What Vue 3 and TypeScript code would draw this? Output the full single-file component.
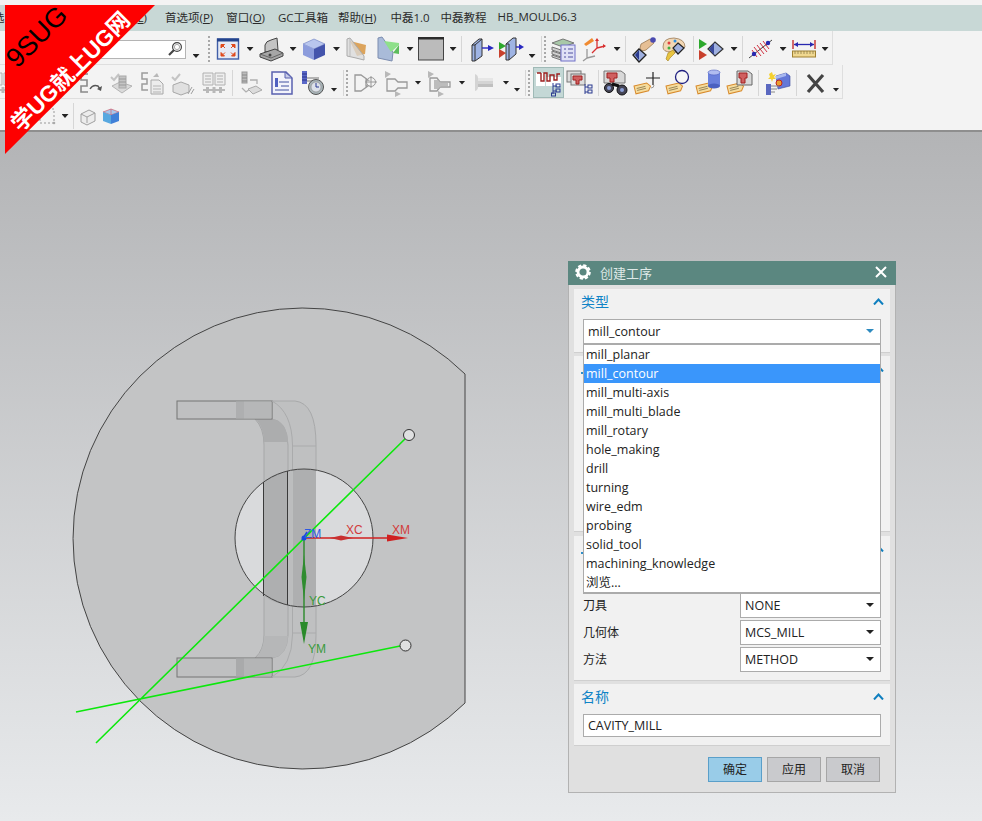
<template>
  <div class="app">
    <div class="top-strip" />

    <div class="menubar">
      <div class="menu-lead">
        <span class="menu-cut">选</span>
        <span>工具(<u>L</u>)</span>
      </div>
      <span v-for="m in menus" :key="m.name" class="menu-item" :style="{ marginRight: m.gap + 'px' }">
        {{ m.name }}<template v-if="m.key">(<u>{{ m.key }}</u>)</template>
      </span>
    </div>

    <div class="toolbars">
      <div v-for="(row, r) in rows" :key="r" class="tool-row" :class="'row-' + r">
        <div v-if="r === 0" class="search">
          <svg viewBox="0 0 16 16" width="16" height="16">
            <circle cx="10" cy="6" r="4.4" fill="#fff" stroke="#444" stroke-width="1.2" />
            <circle cx="10" cy="6" r="2.6" fill="none" stroke="#aaa" />
            <path d="M7 9 2 14" stroke="#444" stroke-width="2.2" />
          </svg>
        </div>
        <div
          v-for="(t, i) in row"
          :key="i"
          class="tool"
          :class="[t.k, { on: t.on }]"
          :style="{ marginLeft: t.ml + 'px' }"
        >
          <svg v-if="t.k === 'icon'" viewBox="0 0 28 28" width="28" height="28" v-html="icons[t.i || 'fit']" />
        </div>
      </div>
    </div>

    <div class="viewport">
      <svg class="scene" viewBox="0 132 982 689" width="982" height="689">
        <!-- round blank with flat cut on the right -->
        <path d="M465 374 A230.5 230.5 0 1 0 465 703 Z" fill="#c3c4c5" stroke="#444" stroke-width="1" />

        <!-- U shaped pocket -->
        <path d="M272 401H295Q316 403 316 445V635Q316 675 295 677H272Z" fill="#bfc0c1" stroke="#a8a9aa" />
        <path d="M255 419H272Q287 421 288 445V635Q287 656 272 658H255Q264 650 264 635V445Q264 428 255 419Z" fill="#bdbebf" stroke="#a6a7a8" />
        <path d="M256 419H272Q287 421 288 442H264Q264 428 256 419Z" fill="#acadae" />
        <path d="M264 636H288Q287 656 272 658H256Q264 650 264 636Z" fill="#b6b7b8" />
        <rect x="177" y="401" width="95" height="18" fill="#bfc0c1" stroke="#757575" />
        <rect x="177" y="658" width="95" height="19" fill="#bfc0c1" stroke="#757575" />
        <rect x="236" y="401.500" width="8" height="17" fill="#aeafb0" />
        <rect x="244" y="401.500" width="27.500" height="17" fill="#b6b7b8" />
        <rect x="236" y="658.500" width="8" height="18" fill="#a9aaab" />
        <rect x="244" y="658.500" width="27.500" height="18" fill="#b4b5b6" />
        <path d="M292.500 445V635M272 401Q292 412 292.500 445M292.500 635Q292 666 272 677M292.500 446H316M292.500 633H316" fill="none" stroke="#aaabac" />

        <!-- center hole -->
        <circle cx="304" cy="538" r="69" fill="#d9dadc" />
        <path d="M264 481V596Q275 604 288 605V471Q275 473 264 481Z" fill="#aeafb0" />
        <path d="M288 471V605.500L292.500 606.500V470Z" fill="#bcbdbe" />
        <path d="M292.500 470V606.500Q305 608 316 606V470Q305 468 292.500 470Z" fill="#aeafb0" />
        <path d="M263.500 482V596M287.500 471V605" stroke="#3a3a3a" stroke-width="1" fill="none" />
        <circle cx="304" cy="538" r="69" fill="none" stroke="#444" stroke-width="1" />

        <!-- green cut lines -->
        <path d="M409 435 96 743M405 645 76 712" stroke="#0ce80c" stroke-width="1.600" fill="none" />
        <circle cx="409" cy="435" r="5.500" fill="#dfe0e1" stroke="#333" />
        <circle cx="405.500" cy="645.500" r="5.500" fill="#dfe0e1" stroke="#333" />

        <!-- wcs -->
        <path d="M304 538H400" stroke="#d02020" stroke-width="1.400" />
        <path d="M330 538 341 535.500 353 538 341 540.500Z" fill="#c83030" />
        <path d="M387 534.500 408 538 387 541.500Z" fill="#d02020" />
        <path d="M304 538V632" stroke="#2a8a2a" stroke-width="1.400" />
        <path d="M304 555 306.500 577 304 600 301.500 577Z" fill="#2f8c2f" />
        <path d="M300 622 304 644 308 622Z" fill="#2a8a2a" />
        <circle cx="304" cy="538" r="2.500" fill="#1a4ae0" />
        <path d="M302 540 307 532" stroke="#1a4ae0" stroke-width="1.500" />
        <text x="304" y="538" class="axis blue">ZM</text>
        <text x="346" y="534" class="axis red">XC</text>
        <text x="392" y="534" class="axis red">XM</text>
        <text x="309" y="605" class="axis green">YC</text>
        <text x="308" y="653" class="axis green">YM</text>
      </svg>

      <div class="dialog">
        <div class="dlg-title">
          <svg viewBox="0 0 16 16" width="16" height="16">
            <circle cx="8" cy="8" r="5" fill="none" stroke="#fff" stroke-width="2.800" />
            <circle cx="8" cy="8" r="6.800" fill="none" stroke="#fff" stroke-width="2" stroke-dasharray="3.300 2.040" />
          </svg>
          <span class="dlg-name">创建工序</span>
          <svg class="dlg-close" viewBox="0 0 12 12" width="12" height="12">
            <path d="M1 1 11 11M11 1 1 11" stroke="#fff" stroke-width="2" />
          </svg>
        </div>

        <section class="sec sec-type">
          <header class="sec-head">
            <span>类型</span>
            <svg class="chev" viewBox="0 0 11 7" width="11" height="7"><path d="M1 6.500 5.500 1.500 10 6.500" /></svg>
          </header>
          <div class="select-wrap">
            <div class="select">
              <span>mill_contour</span>
              <i class="sel-caret blue" />
            </div>
            <ul class="dropdown">
              <li v-for="o in types" :key="o" :class="{ hi: o === 'mill_contour' }">{{ o }}</li>
            </ul>
          </div>
        </section>

        <section class="sec sec-sub">
          <header class="sec-head">
            <i class="peek" />
            <svg class="chev" viewBox="0 0 11 7" width="11" height="7"><path d="M1 6.500 5.500 1.500 10 6.500" /></svg>
          </header>
        </section>

        <section class="sec sec-pos">
          <header class="sec-head">
            <i class="peek" />
            <svg class="chev" viewBox="0 0 11 7" width="11" height="7"><path d="M1 6.500 5.500 1.500 10 6.500" /></svg>
          </header>
          <div class="pos-rows">
            <div v-for="p in places" :key="p.label" class="pos-row">
              <span class="pos-label">{{ p.label }}</span>
              <div class="select small">
                <span>{{ p.value }}</span>
                <i class="sel-caret" />
              </div>
            </div>
          </div>
        </section>

        <section class="sec sec-name">
          <header class="sec-head">
            <span>名称</span>
            <svg class="chev" viewBox="0 0 11 7" width="11" height="7"><path d="M1 6.500 5.500 1.500 10 6.500" /></svg>
          </header>
          <div class="name-input">CAVITY_MILL</div>
        </section>

        <div class="dlg-foot">
          <button class="btn primary">确定</button>
          <button class="btn">应用</button>
          <button class="btn">取消</button>
        </div>
      </div>
    </div>

    <div class="ribbon">
      <span class="rb-top">9SUG</span>
      <span class="rb-main">学UG就上UG网</span>
    </div>
  </div>
</template>

<script setup lang="ts">
type Kind = 'icon' | 'caret' | 'low' | 'sep' | 'dots'
type Spec = [number, Kind, string?, boolean?]

const menus = [
  { name: '首选项', key: 'P', gap: 13 },
  { name: '窗口', key: 'O', gap: 13 },
  { name: 'GC工具箱', key: '', gap: 10 },
  { name: '帮助', key: 'H', gap: 14 },
  { name: '中磊1.0', key: '', gap: 11 },
  { name: '中磊教程', key: '', gap: 11 },
  { name: 'HB_MOULD6.3', key: '', gap: 0 },
]

const types = [
  'mill_planar', 'mill_contour', 'mill_multi-axis', 'mill_multi_blade', 'mill_rotary',
  'hole_making', 'drill', 'turning', 'wire_edm', 'probing', 'solid_tool',
  'machining_knowledge', '浏览...',
]

const places = [
  { label: '刀具', value: 'NONE' },
  { label: '几何体', value: 'MCS_MILL' },
  { label: '方法', value: 'METHOD' },
]

const tagBit = `<g transform="rotate(-14 11 20)"><path d="M3 15h13l3 4-3 4H3z" fill="#f6dc9c" stroke="#d88a2c"/><path d="M5 18h9M5 20h9" stroke="#8a7a50" stroke-width=".8"/></g>`

const icons: Record<string, string> = {
  fit: `<rect x="3.500" y="4" width="21" height="20" fill="#e6eaf4" stroke="#3f5ea8" stroke-width="1.400"/><rect x="3" y="3.500" width="22" height="3" fill="#24448c"/><path d="M7 9.500h3.500L7 13zM21 9.500h-3.500L21 13zM7 21h3.500L7 17.500zM21 21h-3.500L21 17.500zM9 11l2 2M19 11l-2 2M9 19.500l2-2M19 19.500l-2-2" fill="#e04a1c" stroke="#e04a1c"/>`,
  part: `<path d="M8 17V10q1-4 6-5l6-2 1 12z" fill="#c4c4c4" stroke="#444"/><path d="M3 19l15-5 8 4v3l-12 5-11-4z" fill="#a6a6a6" stroke="#444"/><path d="M3 19l11 4 12-5" fill="none" stroke="#666"/><circle cx="13" cy="20" r="1.500" fill="#444"/>`,
  cube: `<path d="M3 9l11-5 11 5-11 5z" fill="#b9c6ee" stroke="#6a7cc0" stroke-width=".6"/><path d="M3 9l11 5v11L3 20z" fill="#8c9cdc"/><path d="M25 9l-11 5v11l11-5z" fill="#4454ac"/>`,
  orange: `<path d="M7 6l16 4-1 9-8 2z" fill="#dca45c"/><path d="M4 4l3-1 14 18v4l-8-2-9-2z" fill="#dadada" fill-opacity=".75" stroke="#aaa"/><path d="M7 3v18" stroke="#bbb"/>`,
  blueplate: `<path d="M4 3l4-1 11 15-1 9-14-3z" fill="#a9bbd9" stroke="#7d8db0"/><path d="M10 6l7 11 8-7v-2z" fill="#8ee08a"/><path d="M19 18l6-8v9z" fill="#5cbc5c"/>`,
  square: `<rect x="1.500" y="3" width="25" height="22" fill="#bbb" stroke="#444"/><rect x="1" y="2" width="26" height="2.500" fill="#2c2c2c"/>`,
  face: `<path d="M4 10l7-6h3v17l-7 5H4z" fill="#9fb4e4" stroke="#333"/><path d="M4 10h3v16M7 10l7-6" fill="none" stroke="#333"/><path d="M14 13h8" stroke="#2828c0" stroke-width="1.400"/><path d="M20 10l6 3-6 3z" fill="#2828c0"/>`,
  face2: `<path d="M2 7l7 4-7 4z" fill="#2ca82c"/><path d="M2 14l7 4-7 5z" fill="#c8402c"/><path d="M9 9l7-6h3v16l-7 6H9z" fill="#9fb4e4" stroke="#333"/><path d="M9 9h3v16" fill="none" stroke="#333"/><path d="M19 12h4" stroke="#2828c0" stroke-width="1.400"/><path d="M22 9l5 3-5 3z" fill="#2828c0"/>`,
  layers: `<path d="M2 8l11-4 11 4-11 4z" fill="#a8c8a8" stroke="#777"/><path d="M2 12l9 3v3l-9-3zM2 16l9 3v3l-9-3zM2 20l9 3v2l-9-3z" fill="#cfcfcf" stroke="#777"/><rect x="11" y="10" width="14" height="16" fill="#e0e2f6" stroke="#7070c8"/><path d="M14 14h2M18 14h5M14 18h2M18 18h5M14 22h2M18 22h5" stroke="#5050a0"/>`,
  csys: `<path d="M16 13V5M16 13l8-2M16 13l-5 5" stroke="#d83030" stroke-width="1.300" fill="none"/><path d="M16 3l2 3h-4zM25 11l-3 2v-4z" fill="#d83030"/><path d="M3 9l8-6 2 3-8 5z" fill="#f08a30"/><path d="M6 14v9M6 23l8-2M6 23l-4 3" stroke="#999" stroke-width="1.300" fill="none"/>`,
  hand: `<path d="M11 9l9-5 4 4-8 7q-5 2-6-2z" fill="#e6bf94" stroke="#8c6a44" stroke-width=".7"/><circle cx="23" cy="5" r="2.800" fill="#4a4ab0"/><path d="M3 20l6-6 7 6-7 7z" fill="#9fb0e0" stroke="#222" stroke-width="1.300"/><path d="M9 15l-4 5 4 5z" fill="#2a3a90"/>`,
  palette: `<path d="M3 12q0-9 11-9 11 1 11 9-3 4-8 5-4 1-6 0-8 0-8-5z" fill="#f2d7b4" stroke="#8c6a44" stroke-width=".7"/><circle cx="9" cy="8" r="1.500" fill="#e04040"/><circle cx="15" cy="6" r="1.500" fill="#3090e0"/><circle cx="9" cy="13" r="1.500" fill="#40b040"/><path d="M8 18l5-3 2 3-5 5-2 3-2-2z" fill="#e8c440" stroke="#a08020" stroke-width=".6"/><path d="M18 8l6 5-6 6-5-6z" fill="#9fb0e0" stroke="#222" stroke-width="1.200"/>`,
  play: `<path d="M2 4l8 5-8 5z" fill="#2ca82c"/><path d="M2 15l8 5-8 5z" fill="#c8402c"/><path d="M11 14l7-7 8 7-8 7z" fill="#9fb0e0" stroke="#333" stroke-width="1.200"/><path d="M17 8l-5 6 5 6z" fill="#3a4a9c"/>`,
  antenna: `<path d="M2 23L25 5" stroke="#444" stroke-width="1"/><path d="M10 10l7 9M13 8l7 9M7 12l7 9M16 6l6 8M5 15l5 7" stroke="#d03040" stroke-width="1"/><circle cx="21" cy="8" r="2.200" fill="#2828b0"/><circle cx="7" cy="19" r="2.200" fill="#2828b0"/>`,
  ruler: `<path d="M3 5v9M25 5v9" stroke="#c02020" stroke-width="1.300"/><path d="M4 9.500h20" stroke="#2828b0" stroke-width="1.300"/><path d="M4 9.500l4-2.500v5zM24 9.500l-4-2.500v5z" fill="#2828b0"/><rect x="2.500" y="16" width="23" height="6" fill="#f0d890" stroke="#a08030"/><path d="M5 16v3M8 16v3M11 16v3M14 16v3M17 16v3M20 16v3M23 16v3" stroke="#807040" stroke-width=".7"/>`,
  sarrow: `<path d="M11 5H4v6h6v6H4v6h7" fill="none" stroke="#8a8a8a" stroke-width="1.600"/><path d="M13 20q3-5 8-3l2 3" fill="none" stroke="#555" stroke-width="1.400"/><path d="M25 17l-1 5-4-2z" fill="#555"/>`,
  grayCheck: `<path d="M3 8l3 3 5-6" fill="none" stroke="#c4c4c4" stroke-width="2"/><path d="M4 17l8-4 12 4-10 7z" fill="#dadada" stroke="#b4b4b4"/><rect x="11" y="7" width="7" height="12" fill="#c4c4c4" stroke="#a8a8a8"/><path d="M11 10h7M11 13h7M11 16h7" stroke="#9a9a9a"/>`,
  grayDoc: `<path d="M10 4H4v6h5v5H4v6h6" fill="none" stroke="#9c9c9c" stroke-width="1.500"/><path d="M13 11h8l4 4v10H13z" fill="#ececec" stroke="#a8a8a8"/><path d="M15 17h8M15 20h8M15 23h8" stroke="#b4b4b4"/><path d="M15 8l4-4 2 4z" fill="#b8b8b8"/>`,
  grayBook: `<path d="M3 4h10v12H3zM15 4h10v12H15z" fill="#eee" stroke="#b0b0b0"/><path d="M5 7h6M5 10h6M5 13h6M17 7h6M17 10h6M17 13h6" stroke="#b0b0b0"/><path d="M3 21h22" stroke="#a0a0a0" stroke-width="1.400"/><rect x="6" y="18" width="3" height="6" fill="#b8b8b8"/><rect x="19" y="18" width="3" height="6" fill="#b8b8b8"/><rect x="12.500" y="18" width="3" height="6" fill="#b8b8b8"/>`,
  grayCheck2: `<path d="M3 8l3 3 5-6" fill="none" stroke="#c4c4c4" stroke-width="2"/><path d="M4 16l8-3 8 3v7l-8 3-8-3z" fill="#e0e0e0" stroke="#a8a8a8"/><path d="M19 25l4-7M22 25l3-5" stroke="#a0a0a0"/>`,
  grayTool: `<rect x="6" y="3" width="5" height="11" fill="#bbb" stroke="#999"/><path d="M6 6h5M6 9h5M6 12h5" stroke="#888"/><path d="M14 11h7v4M6 19l4 4 4-3" fill="none" stroke="#b0b0b0" stroke-width="1.300"/><path d="M12 20l8-3 6 4-9 4z" fill="#dcdcdc" stroke="#aaa"/>`,
  report: `<path d="M4 3h14l6 6v16H4z" fill="#f2f3fb" stroke="#5a62b0" stroke-width="1.500"/><rect x="7" y="9" width="3" height="9" fill="#5060c0"/><path d="M11 13h10M13 17h8M7 21h14" stroke="#4050a0"/><path d="M17 3l7 6h-7z" fill="#c8cce8" stroke="#5a62b0"/>`,
  clock: `<rect x="3" y="2" width="5" height="13" fill="#5a68c8"/><path d="M3 5h5M3 8h5M3 11h5" stroke="#2a3488"/><path d="M8 9h12M8 12h6" stroke="#777" stroke-width="1.200"/><circle cx="17" cy="18" r="7.500" fill="#a8b4b8" stroke="#555"/><circle cx="17" cy="18" r="5" fill="#dde2ea" stroke="#888" stroke-width=".6"/><path d="M17 14v4h3" stroke="#2a3a90" fill="none"/>`,
  hole: `<path d="M3 6h6l7 5h-2v6h2l-7 5H3z" fill="none" stroke="#999" stroke-width="1.300"/><circle cx="19" cy="13" r="4.500" fill="none" stroke="#999"/><path d="M13 13h12M19 7v12" stroke="#999"/>`,
  mill1: `<path d="M2 2l6 3-6 4z" fill="#b8b8b8"/><path d="M4 10h8l3 3h9v6H15l-3 3H4z" fill="none" stroke="#9a9a9a" stroke-width="1.300"/><path d="M12 22l6 3-6 3z" fill="#b8b8b8"/>`,
  mill2: `<path d="M2 2l6 3-6 4z" fill="#b8b8b8"/><path d="M4 9h7l3 4h10v5H14l-3 4H4z" fill="none" stroke="#9a9a9a" stroke-width="1.300"/><path d="M8 11h4l3 3h7v3h-7l-3 3H8z" fill="#bcbcbc"/><path d="M12 22l6 3-6 3z" fill="#b8b8b8"/>`,
  mill3: `<path d="M6 5q3 1 3 4h15v9H9q0 3-3 4z" fill="#d4d4d4"/><path d="M9 9h15v3H9z" fill="#e6e6e6"/><path d="M9 15h15v3H9z" fill="#c0c0c0"/>`,
  prog: `<path d="M1 4h9v13h-9zM11 8h15v9H11z" fill="#fff"/><path d="M2 4h4M6 4v8h3V4h3v8h3V6h4v5h3V5h3" fill="none" stroke="#9c2020" stroke-width="1.400"/><path d="M18 14v11M18 17h4M18 22h4" stroke="#2a3a90"/><rect x="21" y="15" width="4" height="3" fill="none" stroke="#2a3a90"/><rect x="21" y="20" width="4" height="3" fill="none" stroke="#2a3a90"/><rect x="16.500" y="24" width="4" height="3" fill="none" stroke="#2a3a90"/>`,
  tool2: `<rect x="2" y="2" width="14" height="11" fill="#ddd" stroke="#777"/><rect x="6" y="5" width="14" height="11" fill="#ddd" stroke="#777"/><path d="M8 7h9v4h-3v4h-3v-4H8z" fill="#d06060" stroke="#a02020"/><path d="M20 15v10M20 18h3M20 23h3" stroke="#2a3a90"/><rect x="23" y="16" width="4" height="3" fill="none" stroke="#2a3a90"/><rect x="23" y="21" width="4" height="3" fill="none" stroke="#2a3a90"/>`,
  bino: `<path d="M3 2h17l4 3v9H3z" fill="#d8d8d8" stroke="#777"/><path d="M6 4h10v5h-3v4H9V9H6z" fill="#d06060" stroke="#a02020"/><circle cx="8" cy="19" r="4.500" fill="#445" stroke="#111"/><circle cx="21" cy="21" r="5" fill="#445" stroke="#111"/><circle cx="8" cy="19" r="2" fill="#8ca0d8"/><circle cx="21" cy="21" r="2" fill="#8ca0d8"/><path d="M11 15l7 2" stroke="#111" stroke-width="3"/>`,
  tagPlus: `${tagBit}<path d="M21 3v13M14 9h14" stroke="#222" stroke-width="1.200"/><path d="M19 19q3 0 3-3" fill="none" stroke="#999"/>`,
  tagCircle: `${tagBit}<circle cx="18" cy="8" r="6.500" fill="#fff" fill-opacity=".3" stroke="#202080" stroke-width="1.300"/>`,
  tagCyl: `${tagBit}<rect x="14" y="3" width="12" height="14" fill="#6a80dc"/><ellipse cx="20" cy="3.500" rx="6" ry="2.500" fill="#b0bcf0" stroke="#5060c0" stroke-width=".6"/><ellipse cx="20" cy="17" rx="6" ry="2.500" fill="#4a60c0"/>`,
  tagTool: `${tagBit}<path d="M12 2h11l4 3v11H12z" fill="#d8d8d8" stroke="#666"/><path d="M14 4h8v5h-2v5h-4V9h-2z" fill="#d06060" stroke="#a02020"/>`,
  spark: `<path d="M13 7l10-3 4 3v10l-12 3z" fill="#6478d8" stroke="#3a4aa0" stroke-width=".6"/><path d="M13 7l10-3v3l-10 3z" fill="#a8b8f0"/><path d="M9 3l1 3 3-1-2 3 2 2-3 0-1 3-1-3H5l2-2-1-3z" fill="#f4d030"/><circle cx="16" cy="14" r="3" fill="#e8a030" stroke="#c02020"/><rect x="3" y="15" width="5" height="11" fill="#5a68c0"/><path d="M8 17h8M8 20h6M8 23h4" stroke="#888"/>`,
  cross: `<path d="M7 6l15 17M22 6L7 23" stroke="#444" stroke-width="3.200"/>`,
  dashbox: `<rect x="7" y="7" width="14" height="14" fill="none" stroke="#999" stroke-dasharray="2 2"/><circle cx="21" cy="21" r="1.300" fill="#aaa"/>`,
  wedge: `<path d="M7 12l8-4 6 3v8l-8 4-6-3z" fill="#ececec" stroke="#a0a0a0"/><path d="M7 12l6 3 8-4M13 15v6" fill="none" stroke="#a0a0a0"/>`,
  colorbox: `<path d="M6 10l8-3 8 3-8 3z" fill="#a8c8ec" stroke="#d06070" stroke-width=".7"/><path d="M6 10l8 3v9l-8-3z" fill="#58a8e0"/><path d="M22 10l-8 3v9l8-3z" fill="#4080d8"/><path d="M14 7v6" stroke="#d06070" stroke-width=".7"/>`,
}

const widths: Record<Kind, number> = { icon: 28, caret: 7, low: 7, sep: 1, dots: 2 }

// turn wanted centre positions into margins, so the row stays in normal flow
function layout(start: number, specs: Spec[]) {
  let edge = start
  return specs.map(([x, k, i, on]) => {
    const w = on ? 31 : widths[k]
    const ml = x - w / 2 - edge
    edge = x + w / 2
    return { k, i, on, ml }
  })
}

const rows = [
  layout(186, [
    [196, 'low'], [209, 'dots'], [228, 'icon', 'fit'], [250, 'caret'], [271, 'icon', 'part'], [293, 'caret'],
    [314, 'icon', 'cube'], [336.5, 'caret'], [357, 'icon', 'orange'], [388, 'icon', 'blueplate'], [410, 'caret'],
    [431, 'icon', 'square'], [453, 'caret'], [461.5, 'sep'], [482, 'icon', 'face'], [511, 'icon', 'face2'],
    [532, 'low'], [541, 'sep'], [545, 'dots'], [564, 'icon', 'layers'], [595, 'icon', 'csys'], [617, 'caret'],
    [625.5, 'sep'], [644, 'icon', 'hand'], [674, 'icon', 'palette'], [693, 'sep'], [711, 'icon', 'play'],
    [734, 'caret'], [742.5, 'sep'], [761, 'icon', 'antenna'], [783, 'caret'], [804, 'icon', 'ruler'], [825, 'caret'],
  ]),
  layout(0, [
    [3, 'icon', 'grayBook'], [91, 'icon', 'sarrow'], [122, 'icon', 'grayCheck'], [152, 'icon', 'grayDoc'],
    [183, 'icon', 'grayCheck2'], [214, 'icon', 'grayBook'], [232, 'sep'], [250, 'icon', 'grayTool'],
    [282, 'icon', 'report'], [313, 'icon', 'clock'], [334, 'low'], [343, 'sep'], [347, 'dots'],
    [366, 'icon', 'hole'], [397, 'icon', 'mill1'], [418, 'caret'], [440, 'icon', 'mill2'], [462, 'caret'],
    [483, 'icon', 'mill3'], [506, 'caret'], [517, 'low'], [525, 'sep'], [529, 'dots'],
    [548.5, 'icon', 'prog', true], [579, 'icon', 'tool2'], [598, 'sep'], [615, 'icon', 'bino'],
    [646, 'icon', 'tagPlus'], [678, 'icon', 'tagCircle'], [708, 'icon', 'tagCyl'], [739, 'icon', 'tagTool'],
    [758, 'sep'], [777, 'icon', 'spark'], [796, 'sep'], [815, 'icon', 'cross'], [836, 'low'],
  ]),
  layout(0, [[47, 'icon', 'dashbox'], [65, 'caret'], [73, 'sep'], [88, 'icon', 'wedge'], [111, 'icon', 'colorbox']]),
]
</script>

<style scoped>
.app {
  position: relative;
  width: 982px;
  height: 821px;
  overflow: hidden;
  display: flex;
  flex-direction: column;
  background: #f3f3f3;
  font-family: "Open Sans", "Noto Sans CJK SC", sans-serif;
  font-size: 12px;
  color: #222;
}

.top-strip {
  height: 5px;
}

.menubar {
  height: 27px;
  box-sizing: border-box;
  padding-bottom: 2px;
  display: flex;
  align-items: center;
  background: #c8d8d6;
  white-space: nowrap;
  color: #2a2a2a;
  font-size: 11.500px;
}

.menu-lead {
  width: 165px;
  flex: none;
  display: flex;
  justify-content: space-between;
  padding-right: 18px;
  box-sizing: border-box;
}

.menu-cut {
  margin-left: -7px;
}

.toolbars {
  height: 99px;
  flex: none;
  border-bottom: 2px solid #8e8e8e;
  display: flex;
  flex-direction: column;
}

.tool-row {
  display: flex;
  align-items: center;
  flex: none;
  box-sizing: border-box;
}

.row-0 {
  height: 34px;
  width: 833px;
  padding-top: 3px;
  border-bottom: 1px solid #dedede;
  border-right: 1px solid #dedede;
}

.row-1 {
  height: 34px;
  width: 843px;
  padding-top: 2px;
  border-bottom: 1px solid #dedede;
  border-right: 1px solid #dedede;
}

.row-2 {
  height: 31px;
  padding-top: 3px;
}

.search {
  width: 146px;
  height: 19px;
  margin-left: 40px;
  flex: none;
  box-sizing: border-box;
  background: #fff;
  border: 1px solid #b4b4b4;
  display: flex;
  align-items: center;
  justify-content: flex-end;
  padding-right: 2px;
}

.tool {
  flex: none;
  display: flex;
  align-items: center;
  justify-content: center;
}

.tool.icon {
  width: 28px;
  height: 28px;
}

.tool.icon.on {
  width: 31px;
  height: 31px;
  box-sizing: border-box;
  background: #c4d8d6;
  border: 1px solid #9fb9b6;
}

.tool.caret,
.tool.low {
  width: 7px;
  height: 4px;
  background: #222;
  clip-path: polygon(0 0, 100% 0, 50% 100%);
}

.tool.low {
  margin-top: 14px;
}

.tool.sep {
  width: 1px;
  height: 26px;
  background: #d6d6d6;
}

.tool.dots {
  width: 2px;
  height: 26px;
  background: repeating-linear-gradient(to bottom, #a8a8a8 0 2px, transparent 2px 4px);
}

.viewport {
  position: relative;
  flex: 1;
  background: linear-gradient(to bottom, #b3b4b6, #e8eaec);
}

.scene {
  display: block;
}

.axis {
  font-family: "Liberation Sans", sans-serif;
  font-size: 12px;
}

.axis.blue {
  fill: #2a5ae0;
}

.axis.red {
  fill: #d23c3c;
}

.axis.green {
  fill: #3a9a3a;
}

.dialog {
  position: absolute;
  left: 568px;
  top: 129px;
  width: 328px;
  height: 532px;
  box-sizing: border-box;
  background: #e0e0e0;
  border: 1px solid #b2b2b2;
  border-top: none;
  font-size: 12.500px;
  color: #222;
}

.dlg-title {
  height: 24px;
  box-sizing: border-box;
  margin: 0 -1px;
  padding: 0 9px 2px 7px;
  background: #5b8780;
  display: flex;
  align-items: center;
  color: #dfe9e7;
  font-size: 13px;
}

.dlg-name {
  margin-left: 9px;
  flex: 1;
}

.dlg-close {
  flex: none;
}

.sec {
  margin: 0 5px;
  background: #f1f1f1;
  border-bottom: 1px solid #cfcfcf;
  box-sizing: border-box;
}

.sec-type {
  height: 64px;
  margin-top: 4px;
}

.sec-sub {
  height: 176px;
  margin-top: 3px;
}

.sec-pos {
  height: 145px;
  margin-top: 4px;
}

.sec-name {
  height: 62px;
  margin-top: 3px;
}

.sec-head {
  height: 30px;
  box-sizing: border-box;
  padding: 0 6px 6px 7px;
  display: flex;
  align-items: center;
  justify-content: space-between;
  color: #0f83c6;
  font-size: 14px;
}

.peek {
  width: 3px;
  height: 2px;
  margin-left: -0.500px;
  margin-top: 9px;
  background: #2f8fca;
}

.chev {
  fill: none;
  stroke: #0f7fbf;
  stroke-width: 2;
}

.select-wrap {
  position: relative;
  margin: 0 9px;
}

.select {
  height: 25px;
  box-sizing: border-box;
  background: #fff;
  border: 1px solid #ababab;
  padding: 0 5px 1px 4px;
  display: flex;
  align-items: center;
  justify-content: space-between;
}

.sel-caret {
  width: 8px;
  height: 4px;
  margin-right: 1px;
  background: #222;
  clip-path: polygon(0 0, 100% 0, 50% 100%);
}

.sel-caret.blue {
  background: #2d8abf;
}

.dropdown {
  position: absolute;
  z-index: 2;
  left: 0;
  right: 0;
  top: 100%;
  margin: 0;
  padding: 0;
  list-style: none;
  background: #fff;
  border: 1px solid #ababab;
  border-bottom-width: 2px;
}

.dropdown li {
  height: 19px;
  line-height: 19px;
  padding-left: 2px;
}

.dropdown li.hi {
  background: #3a96fb;
  color: #fff;
}

.pos-rows {
  margin: 27px 9px 0;
  display: flex;
  flex-direction: column;
  gap: 2px;
}

.pos-row {
  display: flex;
  align-items: center;
  justify-content: space-between;
}

.pos-label {
  font-size: 12px;
  padding-bottom: 2px;
}

.select.small {
  width: 141px;
}

.name-input {
  height: 23px;
  margin: 0 9px;
  box-sizing: border-box;
  background: #fff;
  border: 1px solid #ababab;
  padding: 0 0 1px 4px;
  display: flex;
  align-items: center;
}

.dlg-foot {
  display: flex;
  justify-content: flex-end;
  gap: 5px;
  padding: 11px 15px 0 0;
}

.btn {
  width: 54px;
  height: 25px;
  padding: 0 0 1px;
  box-sizing: border-box;
  font: inherit;
  font-size: 12px;
  color: #222;
  background: #c9cacd;
  border: 1px solid #a6a6a6;
}

.btn.primary {
  background: #99cce8;
  border-color: #5a9fc9;
}

.ribbon {
  position: absolute;
  left: 5px;
  top: 5px;
  width: 150px;
  height: 149px;
  background: #fe0000;
  clip-path: polygon(0 0, 100% 0, 0 100%);
}

.rb-top,
.rb-main {
  position: absolute;
  white-space: nowrap;
  transform: translate(-50%, -50%) rotate(-45deg);
  font-family: "Liberation Sans", "Noto Sans CJK SC", sans-serif;
}

.rb-top {
  left: 32px;
  top: 32px;
  font-size: 27px;
  color: #000;
}

.rb-main {
  left: 64px;
  top: 65px;
  font-size: 22.500px;
  font-weight: 700;
  color: #fff;
}
</style>

<style>
html,
body {
  margin: 0;
  overflow: hidden;
}
</style>
